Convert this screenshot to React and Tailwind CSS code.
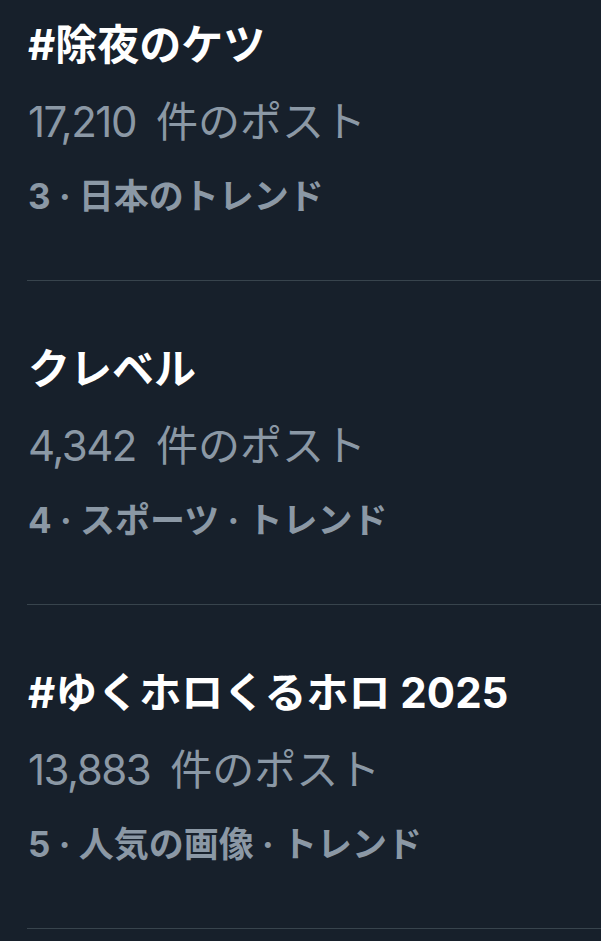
import React from "react";

const trends = [
  { title: "#除夜のケツ", count: "17,210", meta: "3 · 日本のトレンド" },
  { title: "クレベル", count: "4,342", meta: "4 · スポーツ · トレンド" },
  { title: "#ゆくホロくるホロ 2025", count: "13,883", meta: "5 · 人気の画像 · トレンド" },
];

export default function App() {
  return (
    <div
      className="w-[601px] h-[941px] overflow-hidden bg-[#17202b]"
      style={{ fontFamily: 'Inter, "Noto Sans CJK JP", sans-serif' }}
    >
      {trends.map((t, i) => (
        <div key={i} className="ml-[27px] border-b border-[#38444d]">
          <div className={`pl-px pr-4 pb-[62px] ${i === 0 ? "pt-[21px]" : "pt-[64px]"}`}>
            <div className="text-[42px] leading-[48px] font-bold text-white">{t.title}</div>
            <div className="mt-[29px] text-[42px] leading-[48px] text-[#8b98a5]">
              <span className="tracking-[-1.5px]">{t.count}</span>
              <span className="ml-[20px]">件のポスト</span>
            </div>
            <div className="mt-[28px] text-[35px] leading-[44px] font-bold text-[#8b98a5]">{t.meta}</div>
          </div>
        </div>
      ))}
    </div>
  );
}
